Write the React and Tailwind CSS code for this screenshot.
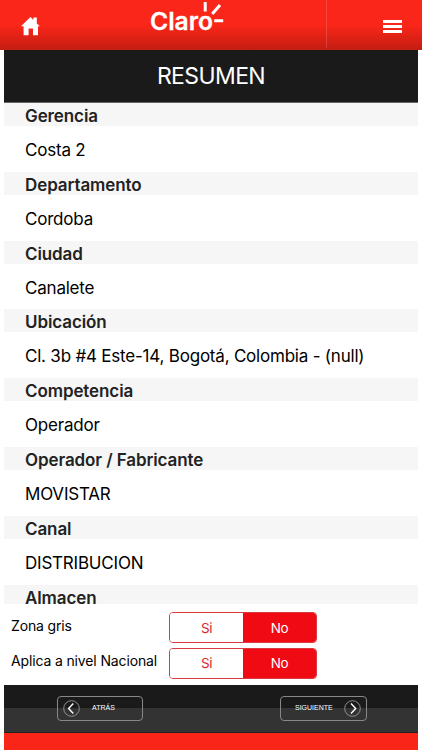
import { useState } from 'react'

const ITEMS = [
  { label: 'Gerencia', value: 'Costa 2' },
  { label: 'Departamento', value: 'Cordoba' },
  { label: 'Ciudad', value: 'Canalete' },
  { label: 'Ubicación', value: 'Cl. 3b #4 Este-14, Bogotá, Colombia - (null)' },
  { label: 'Competencia', value: 'Operador' },
  { label: 'Operador / Fabricante', value: 'MOVISTAR' },
  { label: 'Canal', value: 'DISTRIBUCION' },
  { label: 'Almacen' },
]

function Logo() {
  return (
    <svg width="76" height="36" viewBox="0 0 76 36" className="ml-[149px]" fill="none">
      <text x="1" y="29.8" fontSize="24.5" fontWeight="600" fill="#fff" stroke="#fff" strokeWidth="0.3" textLength="63" lengthAdjust="spacingAndGlyphs">Claro</text>
      <path d="M56.2 2v9.5M71 5L63.2 14M65.2 20.7h9" stroke="#fff" strokeWidth="3" />
    </svg>
  )
}

function Header() {
  return (
    <header className="relative h-[50px] shrink-0 flex items-start bg-linear-to-b from-[#fa2619] from-50% to-[#c41d12] text-white">
      <button className="absolute left-[21px] top-[16px]">
        <svg width="19" height="20" viewBox="0 0 19 20" fill="#fff">
          <path d="M9.5 1L12.4 4V1.5h3.4v6L19 10.3h-2v9h-5v-6.8H7.6v6.8h-5v-9H0z" />
        </svg>
      </button>
      <Logo />
      <div className="absolute left-[326px] top-0 w-px h-[48px] bg-white/15" />
      <button className="absolute left-[383px] top-[20px] flex flex-col gap-[2px]">
        <span className="block w-[19px] h-[3px] bg-white" />
        <span className="block w-[19px] h-[3px] bg-white" />
        <span className="block w-[19px] h-[3px] bg-white" />
      </button>
    </header>
  )
}

function Toggle({ label }) {
  const [value, setValue] = useState('No')

  return (
    <div className="flex items-center h-[35.5px] pl-[7px]">
      <span className="w-[158px] text-[14px] leading-[20px] tracking-[-0.14px] whitespace-nowrap pb-[4px]">{label}</span>
      <div className="flex w-[148px] h-[31px] rounded-[4px] border border-[#d93a40] overflow-hidden text-[13.5px] tracking-[-0.5px]">
        {['Si', 'No'].map((option) => (
          <button
            key={option}
            onClick={() => setValue(option)}
            className={value === option ? 'flex-1 bg-[#f00a14] text-white' : 'flex-1 bg-white text-[#d8262e]'}
          >
            {option}
          </button>
        ))}
      </div>
    </div>
  )
}

function Footer() {
  return (
    <footer className="h-[48px] shrink-0 pl-[53px] pr-[51px] pt-[11px] flex items-start justify-between bg-linear-to-b from-[#1a1a1a] from-50% to-[#333] to-50% border-b border-[#222] text-white font-['Liberation_Sans',sans-serif] text-[7px]">
      <button className="flex items-center w-[86px] h-[25px] pl-[5px] rounded-[4px] border border-[#888]">
        <svg width="17" height="17" viewBox="0 0 17 17" fill="none" stroke="#fff">
          <circle cx="8.5" cy="8.5" r="7.8" strokeWidth="0.8" stroke="#aaa" />
          <path d="M10.3 3.6L5.6 8.5l4.7 4.9" strokeWidth="1.4" />
        </svg>
        <span className="ml-[12px]">ATRÁS</span>
      </button>
      <button className="flex items-center justify-between w-[87px] h-[25px] pl-[14px] pr-[5px] rounded-[4px] border border-[#888]">
        <span>SIGUIENTE</span>
        <svg width="17" height="17" viewBox="0 0 17 17" fill="none" stroke="#fff">
          <circle cx="8.5" cy="8.5" r="7.8" strokeWidth="0.8" stroke="#aaa" />
          <path d="M7 3.6l4.7 4.9L7 13.4" strokeWidth="1.4" />
        </svg>
      </button>
    </footer>
  )
}

export default function App() {
  return (
    <div className="w-[422px] h-[750px] flex flex-col bg-white overflow-hidden text-black font-[Inter,sans-serif]">
      <Header />
      <main className="flex-1 min-h-0 mx-[4px] flex flex-col">
        <h1 className="h-[53px] shrink-0 flex items-center justify-center bg-[#1a1a1a] border-b border-[#666] text-white text-[23px] tracking-[-0.6px]">
          RESUMEN
        </h1>

        {/* Lista de datos */}
        <dl className="h-[501px] shrink-0">
          {ITEMS.map((item) => (
            <div key={item.label} className={item.value ? 'h-[68.8px]' : 'h-[19.4px]'}>
              <dt className="h-[23px] max-h-full pl-[21px] bg-[#f6f6f6] text-[#222] text-[17px] leading-[26px] tracking-[-0.1px] font-semibold">{item.label}</dt>
              {item.value && (
                <dd className="h-[45.8px] pl-[21px] text-[17px] leading-[48px] tracking-[-0.21px] whitespace-nowrap">{item.value}</dd>
              )}
            </div>
          ))}
        </dl>

        <div className="h-[81px] shrink-0 pt-[6px]">
          <Toggle label="Zona gris" />
          <Toggle label="Aplica a nivel Nacional" />
        </div>

        <Footer />
        <div className="flex-1 bg-[#f82518]" />
      </main>
    </div>
  )
}
